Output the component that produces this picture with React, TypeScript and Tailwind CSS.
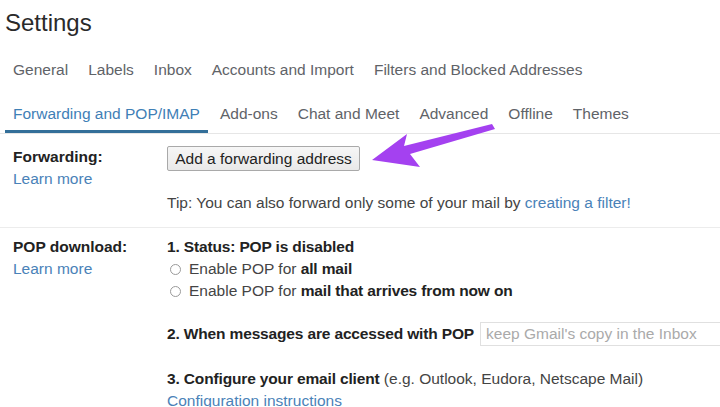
import React from "react";

const Radio = () => (
  <span className="inline-block w-[11px] h-[11px] rounded-full border border-[#9a9a9a] bg-white mr-[8px] ml-[3px] shrink-0" />
);

export default function App() {
  const tabs1 = ["General", "Labels", "Inbox", "Accounts and Import", "Filters and Blocked Addresses"];
  const tabs2 = ["Add-ons", "Chat and Meet", "Advanced", "Offline", "Themes"];
  return (
    <div
      className="relative w-[720px] h-[407px] overflow-hidden bg-white text-[15.5px] text-[#444]"
      style={{ fontFamily: '"Liberation Sans", Arial, sans-serif' }}
    >
      <div className="h-[48px] pl-[5px] pt-[7px] text-[24px] leading-[32px] text-[#2a2a2a]">Settings</div>

      <div className="flex h-[44px] items-center pl-[5px] gap-[4px] text-[#5f6368]">
        {tabs1.map((t) => (
          <div key={t} className="px-2 whitespace-nowrap">{t}</div>
        ))}
      </div>

      <div className="flex h-[42px] pl-[5px] gap-[4px] text-[#5f6368] border-b border-[#e6e6e6]">
        <div className="px-2 whitespace-nowrap text-[#3f80b6] border-b-[3px] border-[#336f99] flex items-center pt-[5px]">
          Forwarding and POP/IMAP
        </div>
        {tabs2.map((t) => (
          <div key={t} className="px-2 whitespace-nowrap flex items-center pt-[2px]">{t}</div>
        ))}
      </div>

      <div className="flex pt-[12px] pb-[13px] border-b border-[#ececec] leading-[22px]">
        <div className="w-[167px] pl-[13px] shrink-0">
          <div className="font-bold text-[#222]">Forwarding:</div>
          <div className="text-[#4a82b8]">Learn more</div>
        </div>
        <div>
          <div className="w-[193px] h-[25px] border border-[#a9a9a9] rounded-[2px] bg-gradient-to-b from-[#f6f6f6] to-[#e9e9e9] text-[#222] flex items-center justify-center whitespace-nowrap">
            Add a forwarding address
          </div>
          <div className="mt-[21px] whitespace-nowrap">
            Tip: You can also forward only some of your mail by{" "}
            <span className="text-[#4a82b8]">creating a filter!</span>
          </div>
        </div>
      </div>

      <div className="flex pt-[8px] leading-[22px]">
        <div className="w-[167px] pl-[13px] shrink-0">
          <div className="font-bold text-[#222]">POP download:</div>
          <div className="text-[#4a82b8]">Learn more</div>
        </div>
        <div className="flex-1 whitespace-nowrap">
          <div className="font-bold text-[#222] tracking-[-0.15px]">1. Status: POP is disabled</div>
          <div className="flex items-center">
            <Radio />
            <span>Enable POP for <b className="text-[#222] tracking-[-0.15px]">all mail</b></span>
          </div>
          <div className="flex items-center">
            <Radio />
            <span>Enable POP for <b className="text-[#222] tracking-[-0.15px]">mail that arrives from now on</b></span>
          </div>
          <div className="flex items-center h-[24px] mt-[20px]">
            <span className="font-bold text-[#222] tracking-[-0.15px]">2. When messages are accessed with POP</span>
            <div className="ml-[6px] w-[260px] h-[24px] border border-[#e0e0e0] flex items-center pl-[5px] text-[#aaa] shrink-0">
              keep Gmail's copy in the Inbox
            </div>
          </div>
          <div className="mt-[22px]">
            <b className="text-[#222] tracking-[-0.15px]">3. Configure your email client</b> (e.g. Outlook, Eudora, Netscape Mail)
          </div>
          <div className="text-[#4a82b8] underline">Configuration instructions</div>
        </div>
      </div>

      <svg className="absolute left-0 top-0 pointer-events-none" width="720" height="407" viewBox="0 0 720 407">
        <path d="M372,160 L407,134 L404,146 L492,124 L495,129 L410,154 L420,167 Z" fill="#a441f0" />
      </svg>
    </div>
  );
}
